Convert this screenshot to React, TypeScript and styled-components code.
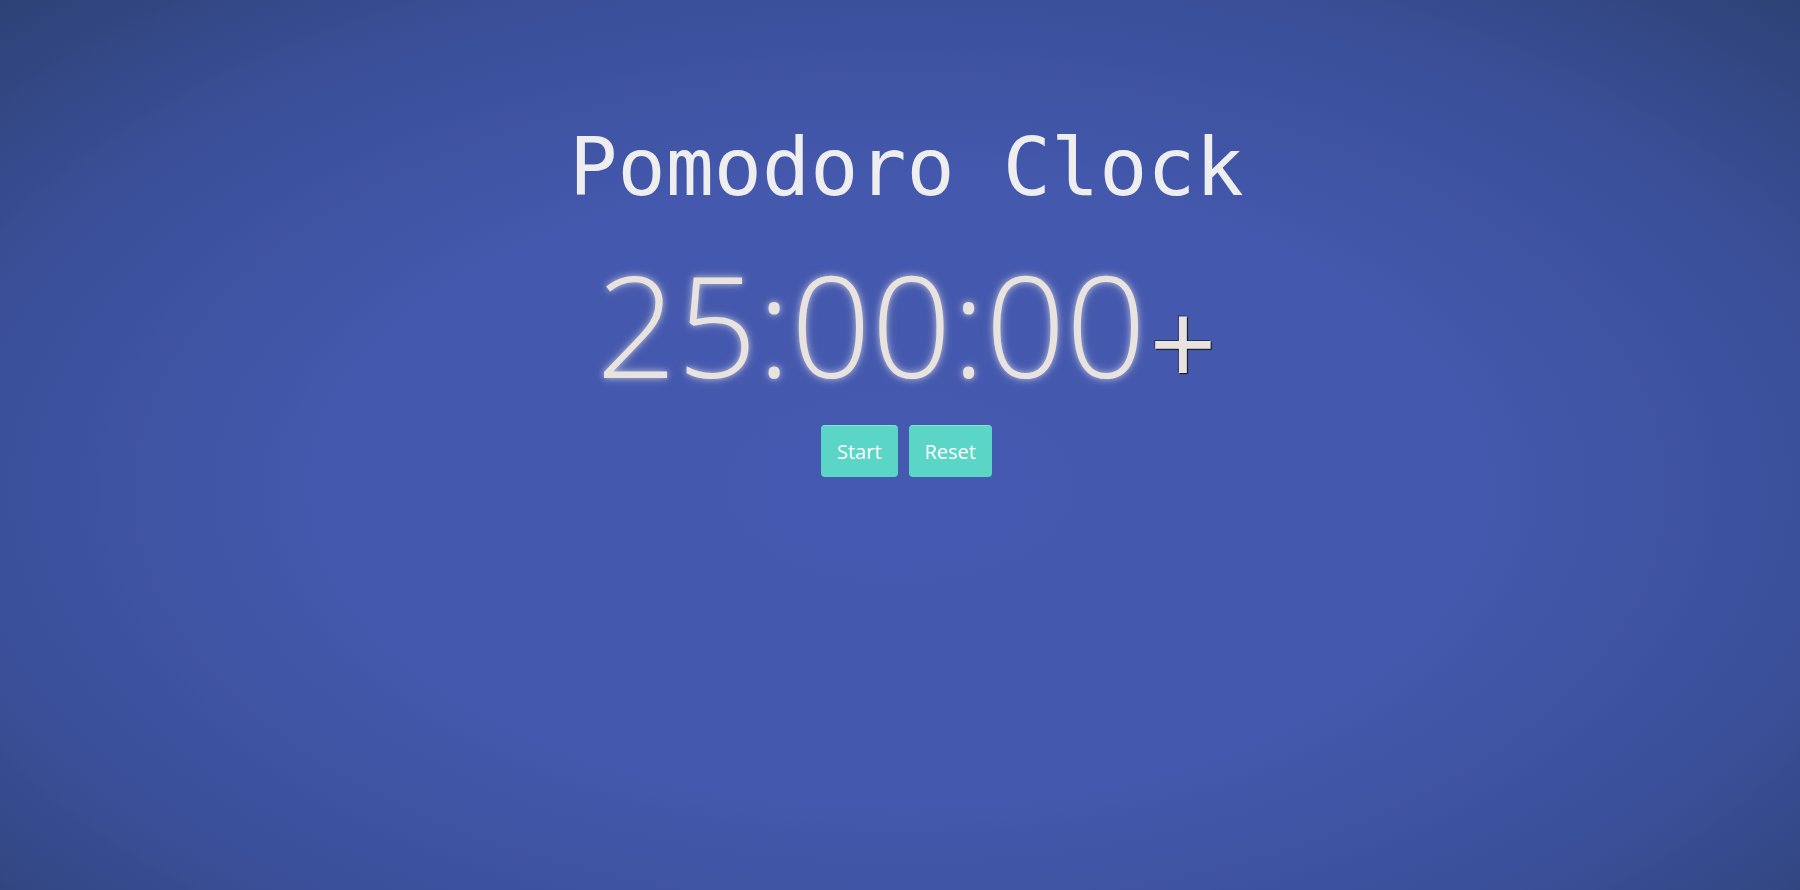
import React from 'react'
import styled, { createGlobalStyle } from 'styled-components'

const GlobalStyle = createGlobalStyle`
    html, body {
        margin:0;
        padding:0;
        height:100%;
    }
    body {
        background:radial-gradient(ellipse farthest-corner at 50% 55%, #4559b0 0%, #4458ad 45%, #3a4f98 75%, #2d4275 100%);
        background-attachment:fixed;
        min-height:890px;
        font-family:"Open Sans", "Noto Sans", sans-serif;
    }
`

const Page = styled.main`
    display:flex;
    flex-direction:column;
    align-items:center;
    padding:114px 0 0 13px;
    min-height:890px;
    box-sizing:border-box;
`

const Title = styled.h1`
    margin:0;
    font-family:"DejaVu Sans Mono", "Liberation Mono", monospace;
    font-weight:400;
    font-size:80px;
    line-height:108px;
    color:#eeeeee;
`

const TimerRow = styled.div`
    margin-top:16px;
    height:170px;
    line-height:170px;
    white-space:nowrap;
`

const Time = styled.span`
    display:inline-block;
    font-family:"Open Sans", "Noto Sans", sans-serif;
    font-weight:300;
    font-size:141px;
    color:#e8e3de;
    text-shadow:0 0 6px rgba(255, 250, 240, 0.55), 0 0 12px rgba(255, 250, 240, 0.25);
`

const Plus = styled.button`
    display:inline-block;
    vertical-align:-8px;
    margin-left:3px;
    background:none;
    border:none;
    padding:0;
    cursor:pointer;
    font-family:"Open Sans", "Noto Sans", sans-serif;
    font-weight:400;
    font-size:118px;
    line-height:1;
    color:#e8e3de;
    text-shadow:1px 1px 1px #111, -1px -1px 0 rgba(20, 20, 40, 0.6);
`

const Controls = styled.div`
    display:flex;
    gap:11px;
    margin-top:17px;
`

const Button = styled.button`
    background-color:#5ad5c6;
    border:none;
    border-top:1px solid #7fe3d6;
    border-radius:4px;
    color:#ffffff;
    font-family:"Open Sans", "Noto Sans", sans-serif;
    font-size:20px;
    height:52px;
    padding:0 16px;
    cursor:pointer;
`

const App: React.FunctionComponent = () => {
    return (
        <>
            <GlobalStyle />
            <Page>
                <Title>Pomodoro Clock</Title>
                <TimerRow>
                    <Time>25:00:00</Time>
                    <Plus>+</Plus>
                </TimerRow>
                <Controls>
                    <Button>Start</Button>
                    <Button>Reset</Button>
                </Controls>
            </Page>
        </>
    )
}
export default App
